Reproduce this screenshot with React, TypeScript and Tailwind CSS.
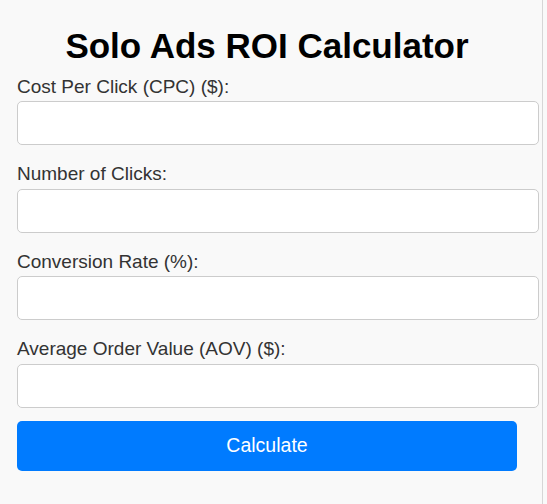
import { useState } from "react";

const FIELDS = [
  { id: "cpc", label: "Cost Per Click (CPC) ($):" },
  { id: "clicks", label: "Number of Clicks:" },
  { id: "rate", label: "Conversion Rate (%):" },
  { id: "aov", label: "Average Order Value (AOV) ($):" },
];

export default function App() {
  const [values, setValues] = useState<Record<string, string>>({});

  return (
    <div className="min-h-screen bg-[#f9f9f9]" style={{ fontFamily: '"Liberation Sans", Arial, sans-serif' }}>
      <div className="min-h-screen w-[543px] border-r border-[#d6d6d6] pl-[17px] pt-[26px]">
        <div className="w-[500px]">
          <h1 className="mb-[9.5px] text-center text-[35px] font-bold leading-[40px] text-black">
            Solo Ads ROI Calculator
          </h1>

          {FIELDS.map((f) => (
            <div key={f.id} className="mb-[18px]">
              <label htmlFor={f.id} className="mb-[3.5px] block text-[19px] leading-[22px] text-[#333]">
                {f.label}
              </label>
              <input
                id={f.id}
                type="number"
                value={values[f.id] ?? ""}
                onChange={(e) => setValues({ ...values, [f.id]: e.target.value })}
                className="block h-[44px] w-[522px] rounded-[5px] border border-[#ccc] bg-white px-[10px] text-[18px] outline-none"
              />
            </div>
          ))}

          <button className="-mt-[5px] h-[50px] w-[500px] rounded-[5px] bg-[#007bff] text-[19.5px] text-white">
            Calculate
          </button>
        </div>
      </div>
    </div>
  );
}
